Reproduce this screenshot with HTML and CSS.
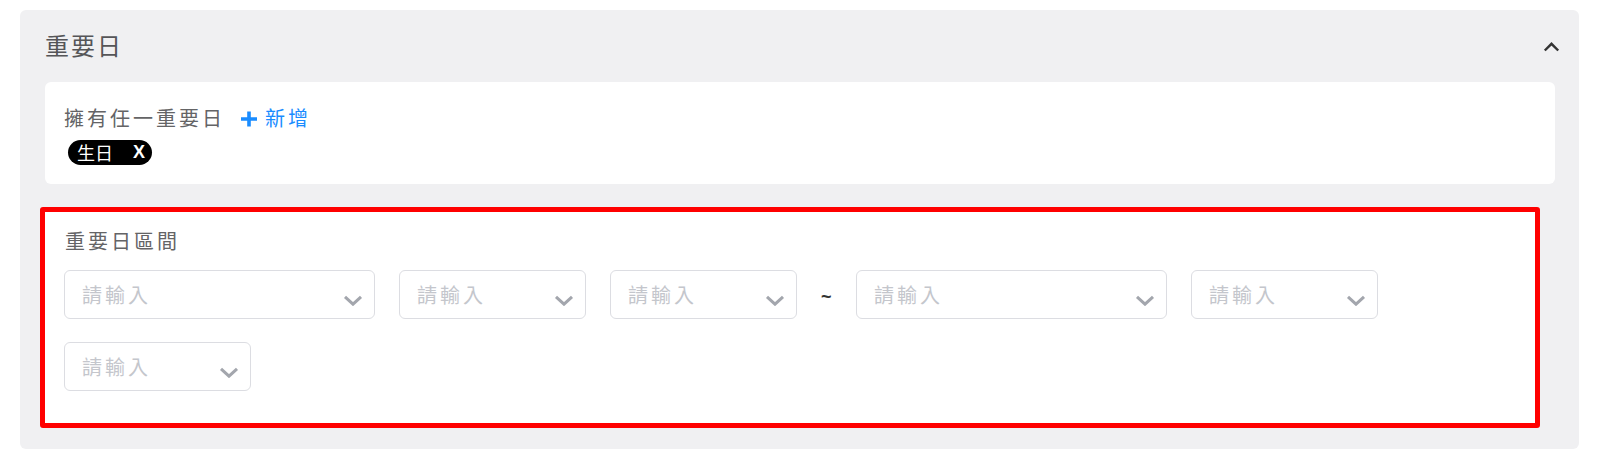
FILE: index.html
```html
<!DOCTYPE html>
<html lang="zh-Hant">
<head>
<meta charset="utf-8">
<title>重要日</title>
<link rel="stylesheet" href="styles.css">
</head>
<body>
<section class="panel">
  <header class="panel-header">
    <h2 class="panel-title">重要日</h2>
    <svg class="collapse-icon" width="17" height="10" viewBox="0 0 17 10"><path d="M1.8 8.5 L8.5 1.8 L15.2 8.5" fill="none" stroke="#333" stroke-width="2.4"/></svg>
  </header>
  <div class="card">
    <div class="card-label">
      <span>擁有任一重要日</span>
      <span class="add-btn">
        <svg class="plus" width="18" height="16" viewBox="0 0 18 16"><path d="M9 0.5 V15.5 M1 8 H17" stroke="#1a8cff" stroke-width="3.6"/></svg>
        <span>新增</span>
      </span>
    </div>
    <div class="chips">
      <span class="chip">生日<span class="chip-x">X</span></span>
    </div>
  </div>
  <div class="card range">
    <div class="range-label">重要日區間</div>
    <div class="fields">
      <div class="select w-lg"><span class="ph">請輸入</span><svg class="caret" width="20" height="11" viewBox="0 0 20 11"><path d="M2 1.8 L10 9.2 L18 1.8" fill="none" stroke="#a3a6ad" stroke-width="3"/></svg></div>
      <div class="select w-sm"><span class="ph">請輸入</span><svg class="caret" width="20" height="11" viewBox="0 0 20 11"><path d="M2 1.8 L10 9.2 L18 1.8" fill="none" stroke="#a3a6ad" stroke-width="3"/></svg></div>
      <div class="select w-sm"><span class="ph">請輸入</span><svg class="caret" width="20" height="11" viewBox="0 0 20 11"><path d="M2 1.8 L10 9.2 L18 1.8" fill="none" stroke="#a3a6ad" stroke-width="3"/></svg></div>
      <span class="sep">~</span>
      <div class="select w-lg"><span class="ph">請輸入</span><svg class="caret" width="20" height="11" viewBox="0 0 20 11"><path d="M2 1.8 L10 9.2 L18 1.8" fill="none" stroke="#a3a6ad" stroke-width="3"/></svg></div>
      <div class="select w-sm"><span class="ph">請輸入</span><svg class="caret" width="20" height="11" viewBox="0 0 20 11"><path d="M2 1.8 L10 9.2 L18 1.8" fill="none" stroke="#a3a6ad" stroke-width="3"/></svg></div>
      <div class="select w-sm"><span class="ph">請輸入</span><svg class="caret" width="20" height="11" viewBox="0 0 20 11"><path d="M2 1.8 L10 9.2 L18 1.8" fill="none" stroke="#a3a6ad" stroke-width="3"/></svg></div>
    </div>
  </div>
</section>
</body>
</html>
```
FILE: styles.css
```css
* { box-sizing: border-box; }
body {
  margin: 0;
  background: #ffffff;
  font-family: "Noto Sans CJK TC", "Noto Sans", sans-serif;
}
.panel {
  margin: 10px 20px 0 20px;
  height: 439px;
  background: #f0f0f2;
  border-radius: 6px;
  padding: 0 24px 21px 25px;
}
.panel-header {
  display: flex;
  justify-content: space-between;
  align-items: center;
  padding-top: 18px;
  height: 52px;
  margin-bottom: 20px;
  margin-right: -5px;
}
.panel-title {
  margin: 0;
  font-size: 24px;
  font-weight: 400;
  line-height: 34px;
  letter-spacing: 2px;
  color: #555558;
}
.collapse-icon { margin-top: 4px; display: block; }
.card {
  background: #ffffff;
  border-radius: 6px;
  padding: 23px 20px 19px 19px;
}
.card-label {
  display: flex;
  align-items: center;
  height: 25px;
  font-size: 20px;
  line-height: 25px;
  letter-spacing: 3px;
  color: #646466;
}
.add-btn {
  display: flex;
  align-items: center;
  margin-left: 15px;
  color: #1a8cff;
}
.plus { display: block; margin-right: 7px; margin-top: 2px; }
.chips { margin-top: 10px; display: flex; }
.chip {
  display: inline-flex;
  align-items: center;
  height: 25px;
  margin-left: 4px;
  padding: 0 7px 0 9px;
  border-radius: 13px;
  background: #000000;
  color: #ffffff;
  font-size: 18px;
  line-height: 25px;
}
.chip-x {
  margin-left: 20px;
  font-family: "Liberation Sans", Arial, sans-serif;
  font-weight: 700;
  font-size: 18px;
}
.range {
  margin: 23px 15px 0 -5px;
  border: 5px solid #ff0000;
  border-radius: 3px;
  padding: 16px 19px 32px 19px;
}
.range-label {
  font-size: 20px;
  line-height: 25px;
  letter-spacing: 3px;
  color: #646466;
  margin-bottom: 17px;
  padding-left: 1px;
}
.fields {
  display: flex;
  flex-wrap: wrap;
  align-items: center;
  column-gap: 24px;
  row-gap: 23px;
}
.select {
  height: 49px;
  border: 1px solid #dcdde2;
  border-radius: 6px;
  display: flex;
  align-items: center;
  justify-content: space-between;
  padding: 0 11px 0 17px;
  background: #fff;
}
.w-lg { width: 311px; }
.w-sm { width: 187px; }
.ph {
  font-size: 20px;
  letter-spacing: 3px;
  color: #c4c6cc;
  line-height: 25px;
}
.caret { display: block; margin-top: 12px; }
.sep {
  width: 11px;
  font-family: "Liberation Sans", Arial, sans-serif;
  font-size: 18px;
  font-weight: 700;
  color: #333;
  line-height: 20px;
  margin-top: 4px;
}
```
